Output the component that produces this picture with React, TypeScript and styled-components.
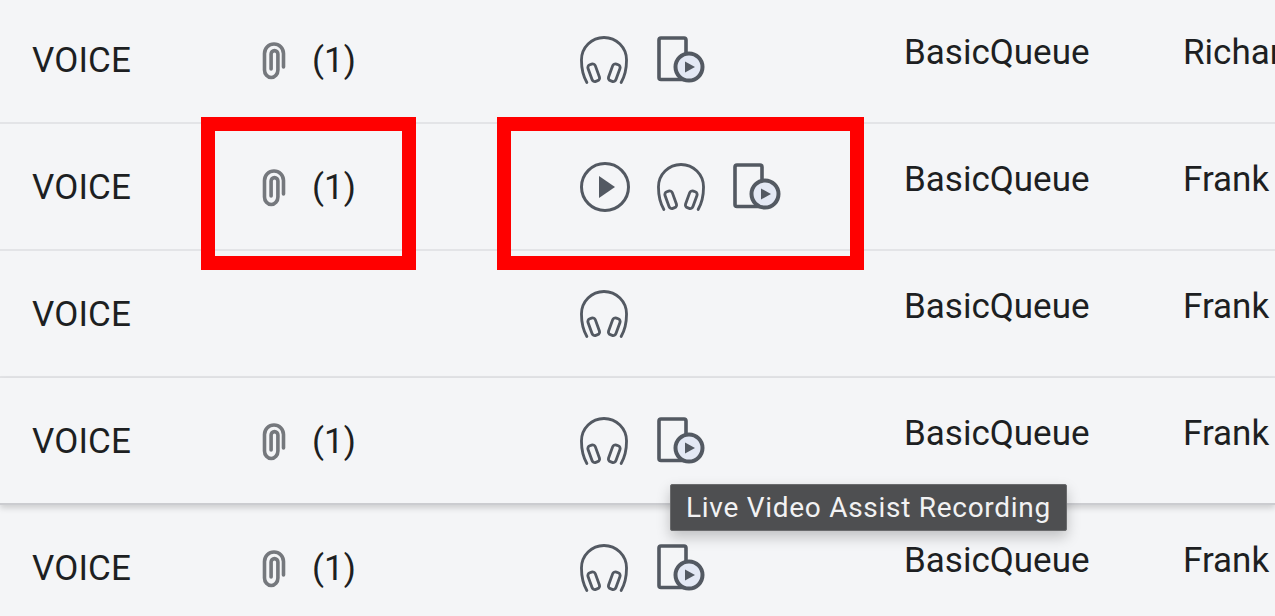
import React from "react";
import styled, { createGlobalStyle } from "styled-components";

const Global = createGlobalStyle`
  html, body { margin: 0; padding: 0; background: #f4f5f7; overflow: hidden; }
`;

const Page = styled.div`
  position: relative;
  width: 1275px;
  height: 616px;
  overflow: hidden;
  background: #f4f5f7;
  font-family: Roboto, "Liberation Sans", sans-serif;
  color: #1d1f22;
`;

const Table = styled.div`
  display: flex;
  flex-direction: column;
  margin-top: -3px;
`;

const Row = styled.div<{ $raised?: boolean }>`
  box-sizing: border-box;
  height: 127px;
  padding-left: 32px;
  display: grid;
  grid-template-columns: 228px 320px 324px 279px 1fr;
  align-items: center;
  border-bottom: 2px solid ${(p) => (p.$raised ? "#cbccd0" : "#e3e4e7")};
  box-shadow: ${(p) => (p.$raised ? "0 3px 6px rgba(0,0,0,0.16)" : "none")};
`;

const TypeCell = styled.div`
  font-size: 35px;
  letter-spacing: 0.15px;
  padding-top: 2px;
`;

const AttachCell = styled.div`
  display: flex;
  align-items: center;
  gap: 26px;
  font-size: 35px;
  padding-top: 2px;
`;

const ClipSlot = styled.div`
  box-sizing: border-box;
  width: 26px;
  display: flex;
  padding-left: 2px;
  padding-top: 1px;
`;

const ActionCell = styled.div`
  display: flex;
  align-items: center;
  gap: 26.5px;
`;

const IconSlot = styled.div`
  width: 50px;
  height: 50px;
  display: flex;
  align-items: center;
`;

const QueueCell = styled.div`
  font-size: 35px;
  padding-bottom: 14px;
`;

const AgentCell = styled.div`
  font-size: 35px;
  padding-bottom: 14px;
  white-space: nowrap;
  overflow: hidden;
`;

const Highlight = styled.div<{ $left: number; $width: number }>`
  position: absolute;
  box-sizing: border-box;
  top: 117px;
  left: ${(p) => p.$left}px;
  width: ${(p) => p.$width}px;
  height: 153px;
  border: 14px solid #ff0000;
`;

const Tooltip = styled.div`
  position: absolute;
  box-sizing: border-box;
  left: 670px;
  top: 484px;
  width: 397px;
  height: 47px;
  display: flex;
  align-items: center;
  justify-content: center;
  background: #4e4f51;
  border: 1px solid #6a6b6d;
  border-radius: 2px;
  color: #f2f2f3;
  font-size: 28px;
  letter-spacing: 0.72px;
  white-space: nowrap;
  box-shadow: 0 6px 14px rgba(0, 0, 0, 0.22);
`;

const STROKE = "#535962";

const ClipIcon = () => (
  <svg width="24" height="38" viewBox="0 0 24 38" fill="none" stroke="#75787d" strokeWidth="3.6" strokeLinecap="round">
    <path d="M21.5 25 V11.5 A9.5 9.5 0 0 0 2.5 11.5 V28 A6.7 7.5 0 0 0 15.9 28 V12 A3.4 3.4 0 0 0 9.1 12 V27" />
  </svg>
);

const PlayIcon = () => (
  <svg width="50" height="50" viewBox="0 0 50 50" fill="none">
    <circle cx="25" cy="25" r="23.5" stroke={STROKE} strokeWidth="3" />
    <path d="M19 14 L35 25 L19 36 Z" fill={STROKE} />
  </svg>
);

const HeadphonesIcon = () => (
  <svg width="48" height="50" viewBox="0 0 49 50" fill="none" stroke={STROKE} strokeWidth="2.9" strokeLinecap="round">
    <path d="M7 48 C3 41 1.5 33 1.5 25 A23 23 0 0 1 47.5 25 C47.5 33 46 41 42 48" />
    <rect x="10" y="29" width="8" height="18" rx="3" transform="rotate(-20 14 38)" />
    <rect x="31" y="29" width="8" height="18" rx="3" transform="rotate(20 35 38)" />
  </svg>
);

const VideoFileIcon = () => (
  <svg width="48" height="47" viewBox="0 0 48 47" fill="none">
    <rect x="2" y="2" width="27" height="41.5" rx="2" stroke={STROKE} strokeWidth="3.6" />
    <circle cx="32" cy="31" r="13.5" fill="#e3e8f4" stroke={STROKE} strokeWidth="4" />
    <path d="M28 25.5 L38 31 L28 36.5 Z" fill={STROKE} />
  </svg>
);

type Action = "play" | "listen" | "video";

const ICONS: Record<Action, React.ReactNode> = {
  play: <PlayIcon />,
  listen: <HeadphonesIcon />,
  video: <VideoFileIcon />,
};

const ROWS: { attach: boolean; actions: Action[]; agent: string; raised?: boolean }[] = [
  { attach: true, actions: ["listen", "video"], agent: "Richard" },
  { attach: true, actions: ["play", "listen", "video"], agent: "Frank" },
  { attach: false, actions: ["listen"], agent: "Frank" },
  { attach: true, actions: ["listen", "video"], agent: "Frank", raised: true },
  { attach: true, actions: ["listen", "video"], agent: "Frank" },
];

export default function App() {
  return (
    <Page>
      <Global />
      <Table>
        {ROWS.map((r, i) => (
          <Row key={i} $raised={r.raised}>
            <TypeCell>VOICE</TypeCell>
            <AttachCell>
              {r.attach && (
                <>
                  <ClipSlot>
                    <ClipIcon />
                  </ClipSlot>
                  <span>(1)</span>
                </>
              )}
            </AttachCell>
            <ActionCell>
              {r.actions.map((a) => (
                <IconSlot key={a}>{ICONS[a]}</IconSlot>
              ))}
            </ActionCell>
            <QueueCell>BasicQueue</QueueCell>
            <AgentCell>{r.agent}</AgentCell>
          </Row>
        ))}
      </Table>
      <Highlight $left={201} $width={215} />
      <Highlight $left={497} $width={367} />
      <Tooltip>Live Video Assist Recording</Tooltip>
    </Page>
  );
}
